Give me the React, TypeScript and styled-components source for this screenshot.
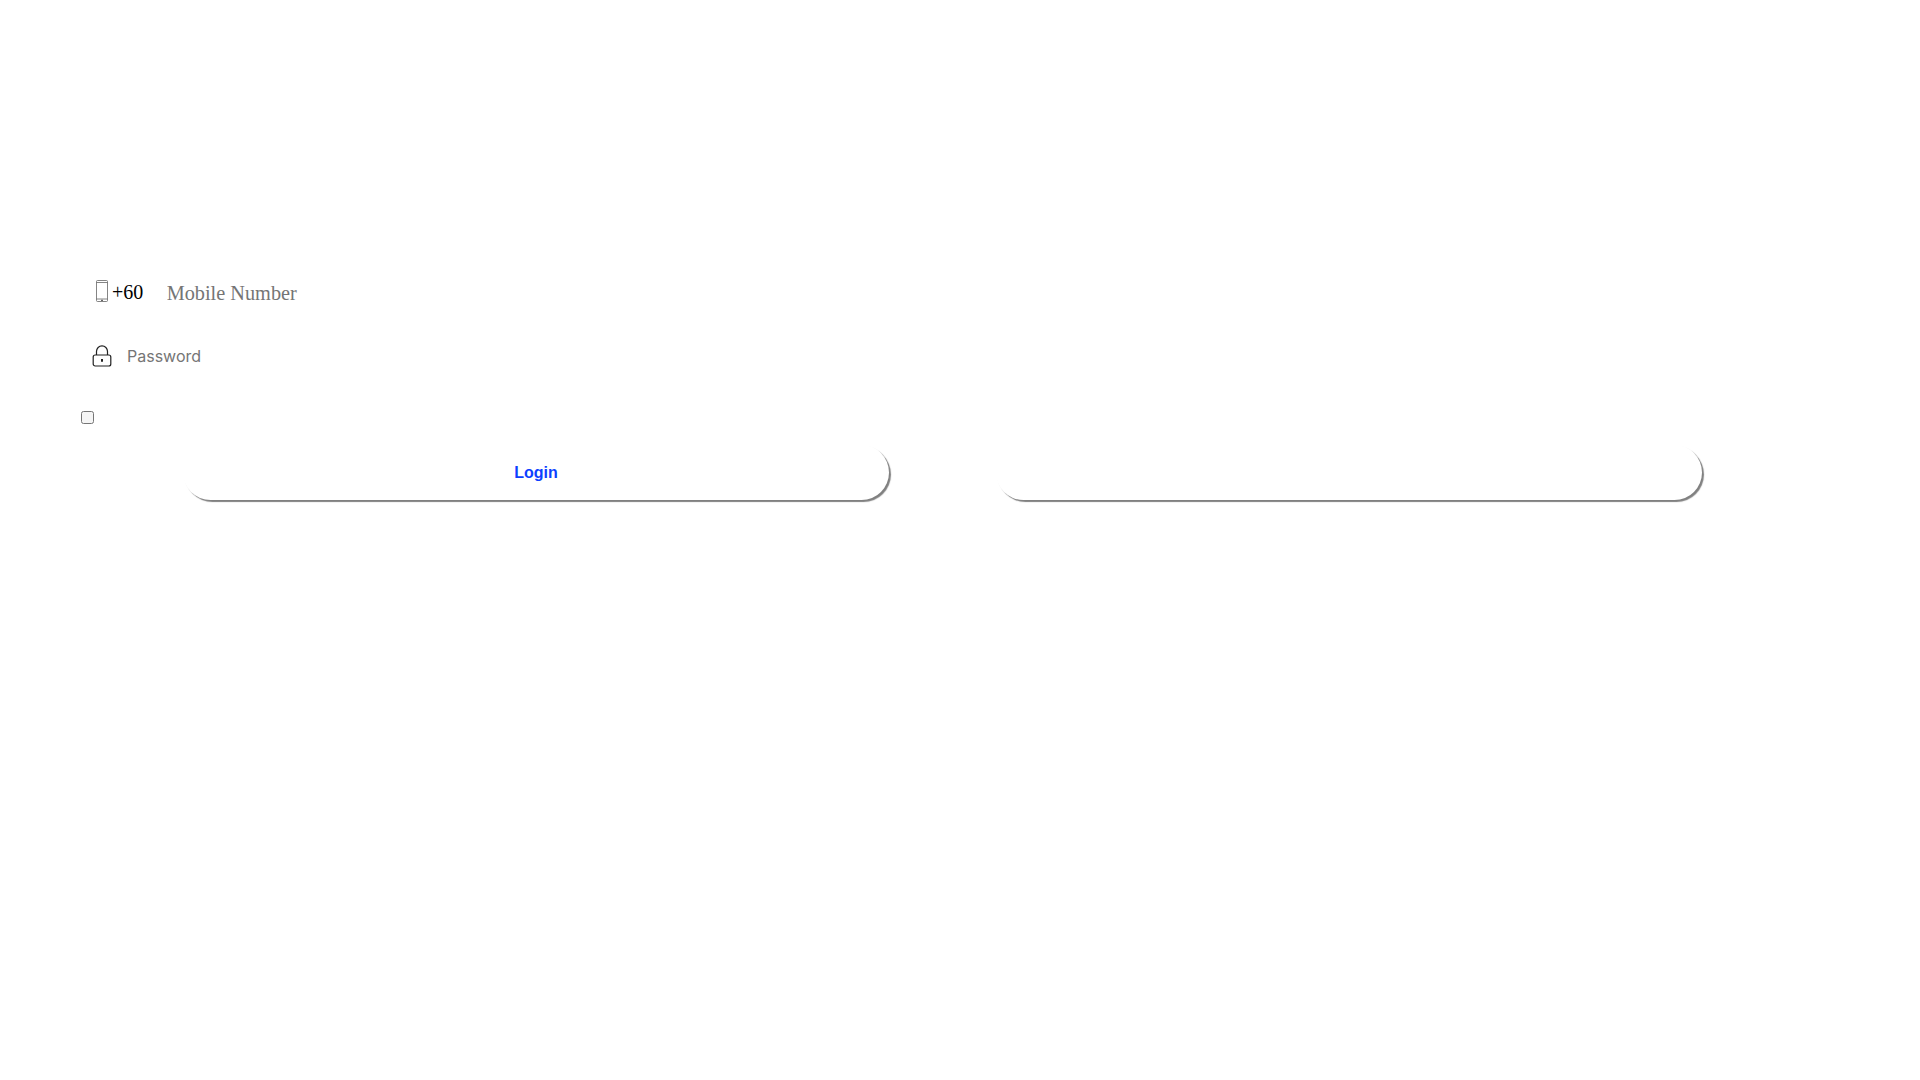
import React from 'react';
import styled, { createGlobalStyle } from 'styled-components';

const GlobalStyle = createGlobalStyle`
  html, body {
    margin: 0;
    padding: 0;
    background: #fff;
  }
`;

const Page = styled.main`
  width: 1920px;
  height: 1080px;
  box-sizing: border-box;
  padding-top: 260px;
`;

const PhoneRow = styled.div`
  display: flex;
  align-items: center;
  height: 64px;
  padding-left: 96px;
`;

const PasswordRow = styled.div`
  display: flex;
  align-items: center;
  column-gap: 15px;
  height: 64px;
  padding-left: 92px;
`;

const PhoneGlyph = styled.svg`
  margin-bottom: 2px;
`;

const LockGlyph = styled.svg`
  margin-bottom: 1px;
`;

const Prefix = styled.span`
  margin: 0 23.4px 0 4px;
  font-family: 'Liberation Serif', serif;
  font-size: 20px;
  color: #000;
`;

const PhoneInput = styled.input`
  width: 400px;
  margin-top: 2px;
  padding: 0;
  border: 0;
  outline: 0;
  background: transparent;
  font-family: 'Liberation Serif', serif;
  font-size: 20.3px;
  color: #000;

  &::placeholder {
    color: #757575;
  }
`;

const PasswordInput = styled.input`
  width: 400px;
  padding: 0;
  border: 0;
  outline: 0;
  background: transparent;
  font-family: Inter, sans-serif;
  font-size: 16px;
  color: #000;

  &::placeholder {
    color: #757575;
  }
`;

const CheckRow = styled.div`
  display: flex;
  align-items: center;
  height: 30px;
  margin-top: 14px;
  padding-left: 81px;
`;

const Check = styled.input`
  appearance: none;
  box-sizing: border-box;
  width: 13px;
  height: 13px;
  margin: 0;
  border: 1px solid #767676;
  border-radius: 2.5px;
  background: #f5f5f5;
`;

const Buttons = styled.div`
  display: flex;
  column-gap: 107px;
  margin-top: 13px;
  padding-left: 183px;
`;

const PillButton = styled.button`
  width: 706px;
  height: 55px;
  padding: 1px 0 0;
  border: 0;
  border-radius: 27.5px;
  background: #fff;
  box-shadow: 2px 2px 1px #808080;
  font-family: 'Liberation Sans', sans-serif;
  font-size: 16px;
  font-weight: 700;
  color: #0d3fff;
`;

function PhoneIcon() {
  return (
    <PhoneGlyph width="12" height="22" viewBox="0 0 12 22" fill="none" stroke="#666" strokeWidth="0.8">
      <rect x="0.5" y="0.5" width="11" height="21" rx="1" />
      <path d="M0.5 2.5h11M0.5 19h11" />
      <path d="M5 20.3h2" strokeWidth="1.2" />
    </PhoneGlyph>
  );
}

function LockIcon() {
  return (
    <LockGlyph width="20" height="22" viewBox="0 0 20 22" fill="none" stroke="#222" strokeWidth="1.2">
      <rect x="1.2" y="10" width="17.6" height="11" rx="2" />
      <path d="M4.5 10V6.5a5.5 5.7 0 0 1 11 0V10" />
      <path d="M10 14v2.8" strokeWidth="2" />
    </LockGlyph>
  );
}

export default function App() {
  return (
    <Page>
      <GlobalStyle />
      <PhoneRow>
        <PhoneIcon />
        <Prefix>+60</Prefix>
        <PhoneInput type="tel" placeholder="Mobile Number" />
      </PhoneRow>
      <PasswordRow>
        <LockIcon />
        <PasswordInput type="password" placeholder="Password" />
      </PasswordRow>
      <CheckRow>
        <Check type="checkbox" />
      </CheckRow>
      <Buttons>
        <PillButton>Login</PillButton>
        <PillButton />
      </Buttons>
    </Page>
  );
}
